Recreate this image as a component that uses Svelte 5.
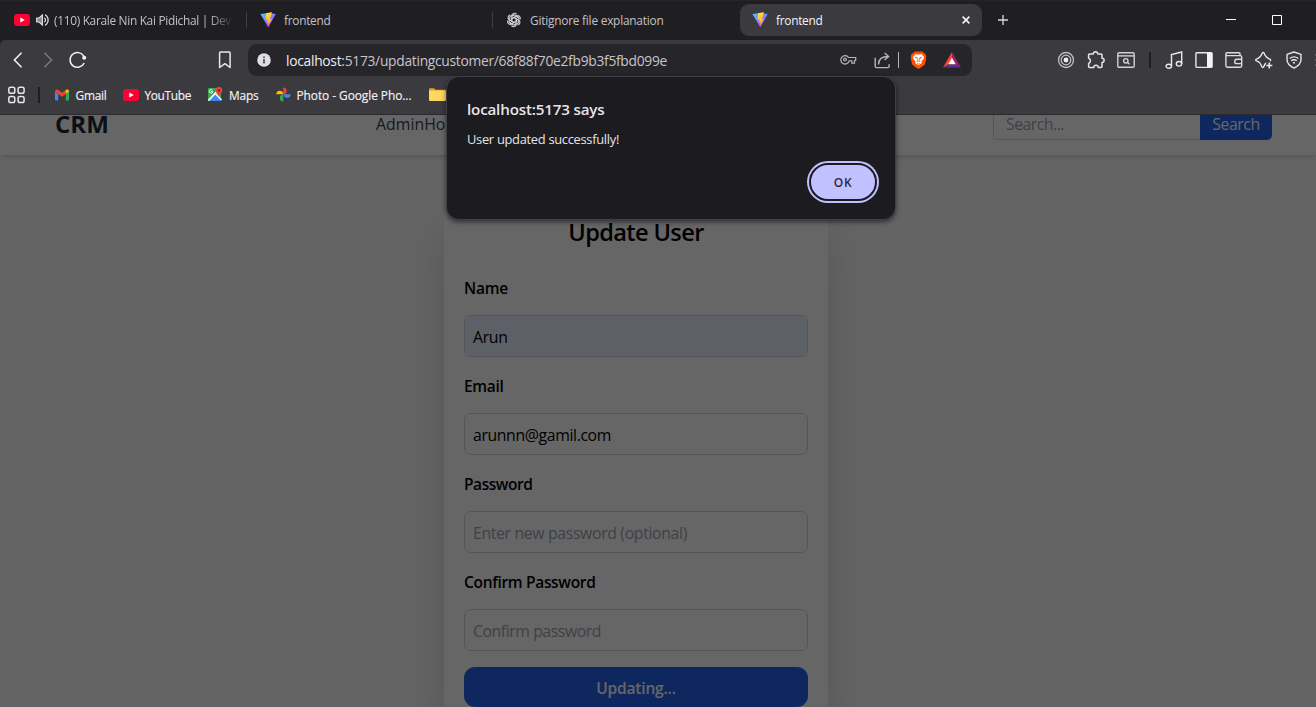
<script>
  // Tracks a text run so that it fills the given width in pixels.
  function fit(node, width) {
    const natural = node.getBoundingClientRect().width;
    const count = node.textContent.length;
    node.style.letterSpacing = `${(width - natural) / count}px`;
  }

  const fields = [
    { label: 'Name', labelWidth: 44, value: 'Arun', width: 34.5, filled: true },
    { label: 'Email', labelWidth: 39.5, value: 'arunnn@gamil.com', width: 138 },
    { label: 'Password', labelWidth: 68.5, hint: 'Enter new password (optional)', width: 214 },
    { label: 'Confirm Password', labelWidth: 131.5, hint: 'Confirm password', width: 128 }
  ];
</script>

{#snippet vite()}
  <svg class="vite" width="16" height="16" viewBox="0 0 16 16">
    <defs>
      <linearGradient id="va" x1="0" y1="0" x2="0.6" y2="1"><stop offset="0" stop-color="#41d1ff" /><stop offset="1" stop-color="#bd34fe" /></linearGradient>
      <linearGradient id="vb" x1="0.4" y1="0" x2="0.6" y2="1"><stop offset="0" stop-color="#ffdc4a" /><stop offset="1" stop-color="#ffa800" /></linearGradient>
    </defs>
    <path d="M.4 2 8 .9 15.7 2 8.3 15.6Z" fill="url(#va)" />
    <path d="M11.2.2 6 1.2 5.6 8l2-.4L7 11l1.6-.5-.8 3.6 4.2-7.2-2 .3L11.9.3Z" fill="url(#vb)" />
  </svg>
{/snippet}

{#snippet tube()}
  <svg width="16" height="12" viewBox="0 0 16 12"><rect width="16" height="12" rx="3" fill="#ff0033" /><path d="M6.3 3.4 10.8 6 6.3 8.6Z" fill="#fff" /></svg>
{/snippet}

<div class="window">
  <div class="tabs">
    <div class="tab first">
      {@render tube()}
      <svg class="sound" width="13" height="14" viewBox="0 0 13 14" fill="none" stroke="#dedde2" stroke-width="1.2"><path d="M.7 5h2.4L6.4 2v10L3.1 9H.7Z" fill="#88878c" /><path d="M8.4 4.7c1.5 1.3 1.5 3.3 0 4.6M9 1.8c4.2 2.3 4.2 8.1 0 10.4" /></svg>
      <span class="fade"><span class="t" use:fit={177}>(110) Karale Nin Kai Pidichal | Dev</span></span>
    </div>
    <div class="tab second">{@render vite()}<span class="t" use:fit={46.5}>frontend</span></div>
    <div class="tab third">
      <svg width="16" height="16" viewBox="-8 -8 16 16" fill="none" stroke="#d0cfd4" stroke-width="1.1">
        {#each [0, 60, 120, 180, 240, 300] as turn}
          <path transform={`rotate(${turn})`} d="M-2.2-1.3V-4.2C-2.2-6.8 1-7.5 2.6-5.6M-2.2-3.6.6-5.2 4.3-3M0-2.6 2.2-1.3V2" />
        {/each}
      </svg>
      <span class="t" use:fit={133.5}>Gitignore file explanation</span>
    </div>
    <div class="tab active">
      {@render vite()}<span class="t" use:fit={46.5}>frontend</span>
      <svg class="close" width="8" height="8" viewBox="0 0 8 8" stroke="#f4f3f7" stroke-width="1.6"><path d="m.6.6 6.8 6.8M7.4.6.6 7.4" /></svg>
    </div>
    <svg class="plus" width="10" height="10" viewBox="0 0 10 10" stroke="#d8d7dc" stroke-width="1.3"><path d="M5 0v10M0 5h10" /></svg>
    <svg class="min" width="10" height="10" viewBox="0 0 10 10" stroke="#fff"><path d="M0 4.5h10" /></svg>
    <svg class="max" width="10" height="10" viewBox="0 0 10 10" stroke="#fff" fill="none"><path d="M.5.5h9v9h-9Z" /></svg>
  </div>

  <div class="toolbar">
    <svg class="back" width="10" height="16" viewBox="0 0 10 16" fill="none" stroke="#f1f0f5" stroke-width="1.6"><path d="M8.6.7 1.4 8l7.2 7.3" /></svg>
    <svg class="next" width="10" height="16" viewBox="0 0 10 16" fill="none" stroke="#77767b" stroke-width="1.6"><path d="m1.4.7 7.2 7.3-7.2 7.3" /></svg>
    <svg class="reload" width="18" height="18" viewBox="0 0 18 18" fill="none" stroke="#f1f0f5" stroke-width="1.5"><path d="M15.2 12A7.4 7.4 0 1 1 15 5.4" /><circle cx="15.2" cy="6.8" r="2" fill="#f1f0f5" stroke="none" /></svg>
    <svg class="mark" width="14" height="18" viewBox="0 0 14 18" fill="none" stroke="#e9e8ed" stroke-width="1.5" stroke-linejoin="round"><path d="M2.5 1h8.7c.5 0 .9.4.9.9V16.5L6.9 12.7 1.6 16.5V1.9c0-.5.4-.9.9-.9Z" /></svg>
    <div class="address">
      <svg width="14" height="14" viewBox="0 0 14 14"><circle cx="7" cy="7" r="6.8" fill="#dfdee5" /><path d="M7 6v4.4M7 3.5v1.4" stroke="#3b3a3f" stroke-width="1.5" /></svg>
      <span class="url" use:fit={381}><b>localhost</b>:5173/updatingcustomer/68f88f70e2fb9b3f5fbd099e</span>
      <svg class="key" width="17" height="12" viewBox="0 0 17 12" fill="none" stroke="#b6b5ba" stroke-width="1.2"><path d="M8.5 3.5h7.2v3h-1.2v2.7h-2.7V6.8H9.1A4.2 4.2 0 1 1 8.5 3.5Z" /><circle cx="5" cy="5.6" r="1.4" /></svg>
      <svg class="share" width="17" height="17" viewBox="0 0 17 17" fill="none" stroke="#b6b5ba" stroke-width="1.4"><path d="M1.2 5.8v8.5c0 .8.5 1.3 1.3 1.3h11.3c.8 0 1.3-.5 1.3-1.3v-2" /><path d="M4.5 12.5c0-4.8 2.8-8 9.6-8M10.6 1l4 3.5-4 3.5" /></svg>
      <i class="rule"></i>
      <svg class="lion" width="17" height="18" viewBox="0 0 17 18"><path d="M4.5.6h8l1.5 1.7 1.2.2 1.2 2.9-.5 1.2.3 1.4-1.4 5.4-3 2.5-3.3 2-3.3-2-3-2.5L.8 8l.3-1.4-.5-1.2 1.2-2.9L3 2.3Z" fill="#ff5000" /><path d="m5.4 3 1.7.4h2.8l1.7-.4 2.3 2.8-.3 2.2-2.2 2.5.4 1.5-3.3 2.5-3.3-2.5.4-1.5L3.4 8l-.3-2.2Z" fill="#fff" /><path d="m4.9 6.2 2.2.4.4 2.8M12.1 6.2l-2.2.4-.4 2.8M6.7 10.7l1.8-.8 1.8.8M7.3 12.4l1.2.9 1.2-.9" fill="none" stroke="#ff5000" stroke-width=".9" /></svg>
      <svg class="bat" width="18" height="16" viewBox="0 0 18 16"><path d="M9 0 0 15.5l5.5-3.2L9 6.2Z" fill="#ff4724" /><path d="m9 0 9 15.5-5.5-3.2L9 6.2Z" fill="#9e1f63" /><path d="M0 15.5h18l-5.5-3.2h-7Z" fill="#662d91" /><path d="m9 5.8 3.8 6.5H5.2Z" fill="#fff" /></svg>
    </div>
    <div class="tools">
      <svg width="18" height="18" viewBox="0 0 18 18" fill="none" stroke="#bebdc2"><circle cx="9" cy="9" r="7.5" stroke-width="1.3" /><circle cx="9" cy="9" r="4.8" stroke-width="1.3" /><circle cx="9" cy="9" r="2.4" fill="#eeedf2" stroke="none" /></svg>
      <svg width="18" height="18" viewBox="0 0 18 18" fill="none" stroke="#e6e5ea" stroke-width="1.5" stroke-linejoin="round"><path d="M2.6 3h3.6a2.3 2.3 0 0 1 4.6 0H14c.6 0 1 .4 1 1v3.2a2.1 2.1 0 0 1 0 4.2v4.1c0 .6-.4 1-1 1h-2.8a2.2 2.2 0 0 0-4.4 0H2.6c-.6 0-1-.4-1-1v-3.1c2.4-.7 2.4-4.5 0-5.1V4c0-.6.4-1 1-1Z" /></svg>
      <svg width="18" height="18" viewBox="0 0 18 18" fill="none" stroke="#d2d1d6" stroke-width="1.4"><rect x=".8" y="1.7" width="16.4" height="14.6" rx="1.2" /><path d="M1 4.9h16" /><circle cx="8.8" cy="9.8" r="2.2" /><path d="m10.4 11.3 2 2" /></svg>
      <i class="divide"></i>
      <svg width="18" height="18" viewBox="0 0 18 18" fill="none" stroke="#e9e8ed" stroke-width="1.4"><ellipse cx="3.8" cy="15.3" rx="2.7" ry="2" /><ellipse cx="14" cy="12.8" rx="2.7" ry="2.3" /><path d="M6.5 15V3.5L16.7 1v11.8" /></svg>
      <svg width="18" height="18" viewBox="0 0 18 18" fill="none" stroke="#e9e8ed" stroke-width="1.4"><rect x=".9" y="1.8" width="16.2" height="14.6" rx="1" /><path d="M12 1.5h5v15h-5Z" fill="#f3f2f7" stroke="none" /></svg>
      <svg width="18" height="18" viewBox="0 0 18 18" fill="none" stroke="#dddce1" stroke-width="1.4"><path d="M15 4.5V2.8c0-.6-.4-1-1-1H2C1.3 1.8.9 2.2.9 2.8v12c0 .8.6 1.4 1.4 1.4h13c.8 0 1.4-.6 1.4-1.4V6c0-.8-.6-1.4-1.4-1.4H1" /><path d="M17 8.2h-5.2c-2.8 0-2.8 4.4 0 4.4H17" /></svg>
      <svg width="18" height="18" viewBox="0 0 18 18" fill="none" stroke="#e9e8ed" stroke-width="1.4" stroke-linejoin="round"><path d="M11 12.2c-1.3.9-1.7 1.8-2.2 3.5C8 16.9 7.2 16.7 6.7 15.4 5.7 12 4.4 10.7 1.4 9.8.5 9.5.5 8.4 1.4 8.1c3.3-1.2 4.7-2.5 5.9-6 .4-1 1.3-1 1.7 0 1.2 3.5 2.5 4.8 5.8 6 1 .4 1 1.5.2 1.8" /><path d="M14.3 11.5v6M11.3 14.5h6" stroke-width="1.6" /></svg>
      <svg width="18" height="18" viewBox="0 0 18 18" fill="none" stroke="#e6e5ea" stroke-width="1.4"><path d="m9 1 7 2.3v5.2c0 4-2.7 6.5-7 8.6-4.3-2.1-7-4.6-7-8.6V3.3Z" stroke-linejoin="round" /><path d="M4.7 7.5c2.5-1.9 6.1-1.9 8.6 0M6.2 9.7c1.7-1.2 3.9-1.2 5.6 0" /><circle cx="9" cy="11.8" r="1" fill="#e6e5ea" stroke="none" /></svg>
    </div>
    <svg class="more" width="1" height="12" viewBox="0 0 1 12" stroke="#5c5b60" stroke-dasharray="2 3"><path d="M.5 0v12" /></svg>
  </div>

  <div class="bookmarks">
    <svg class="grid" width="17" height="18" viewBox="0 0 17 18" fill="none" stroke="#e6e5ea" stroke-width="1.5"><rect x=".8" y="1.2" width="6" height="6" rx="1.8" /><rect x="10.1" y="1.2" width="6" height="6" rx="1.8" /><rect x=".8" y="10.6" width="6" height="6" rx="1.8" /><rect x="10.1" y="10.6" width="6" height="6" rx="1.8" /></svg>
    <i class="divide"></i>
    <svg class="gmail" width="14" height="12" viewBox="0 0 14 12"><path d="M0 2.5 3.2 5v6.5H1c-.6 0-1-.4-1-1Z" fill="#4285f4" /><path d="M14 2.5 10.8 5v6.5H13c.6 0 1-.4 1-1Z" fill="#34a853" /><path d="M0 2.3C0 .5 1.8 0 3 .8l4 3 4-3-.2 4.2L7 7.8 3.2 5 0 2.6Z" fill="#ea4335" /><path d="M10.8.9C12.2 0 14 .6 14 2.2v.6L10.8 5Z" fill="#fbbc04" /></svg>
    <span class="t" use:fit={31}>Gmail</span>
    <span class="yt">{@render tube()}</span>
    <span class="t" use:fit={46.5}>YouTube</span>
    <svg class="maps" width="15" height="15" viewBox="0 0 15 15"><rect y="1" width="13" height="13" rx="1" fill="#34a853" /><path d="M1.5 14 8 7l5 5v2Z" fill="#4285f4" /><path d="M.3 13.5 11 2.5M7.3 6.5 13.5 13" stroke="#f1f1f1" stroke-width="1.8" /><path d="M4.7 4.5H3.2M4.4 3A1.8 1.8 0 1 0 4.9 5" fill="none" stroke="#fff" /><path d="M11 9.5C10.6 7 7.7 6.2 7.7 3.4a3.3 3.3 0 0 1 6.6 0C14.3 6.2 11.4 7 11 9.5Z" fill="#ea4335" /><circle cx="11" cy="3.5" r="1.2" fill="#891b1b" /></svg>
    <span class="t" use:fit={29.5}>Maps</span>
    <svg class="photos" width="15" height="15" viewBox="0 0 15 15"><path d="M7.3 7.3V.4a3.5 3.5 0 0 1 3.5 3.5c0 1.4-.8 2.7-2 3.4Z" fill="#ea4335" /><path d="M7.7 7.3h7a3.5 3.5 0 0 1-7 0Z" fill="#4285f4" /><path d="M7.3 7.7v6.9a3.5 3.5 0 0 1 0-7Z" fill="#34a853" /><path d="M7.3 7.3h-7a3.5 3.5 0 0 1 7 0Z" fill="#fbbc04" /></svg>
    <span class="t" use:fit={115}>Photo - Google Pho...</span>
    <svg class="folder" width="17" height="14" viewBox="0 0 17 14"><path d="M0 1.6C0 .8.5.3 1.3.3h3.6l1.5 1.5h9.3c.8 0 1.3.5 1.3 1.3V12H0Z" fill="#dda51f" /><rect y="2.6" width="17" height="10.3" rx="1.2" fill="#ffd75e" /></svg>
  </div>

  <div class="viewport">
    <div class="nav">
      <span class="brand"><span use:fit={54}>CRM</span></span>
      <span class="link"><span use:fit={93}>AdminHome</span></span>
      <div class="search"><span class="query"><span use:fit={58}>Search...</span></span><span class="go"><span use:fit={47.5}>Search</span></span></div>
    </div>
    <div class="page">
      <div class="card">
        <h2><span use:fit={135.5}>Update User</span></h2>
        {#each fields as f}
          <div class="label"><span use:fit={f.labelWidth}>{f.label}</span></div>
          <div class="input" class:filled={f.filled} class:hint={f.hint}><span use:fit={f.width}>{f.value ?? f.hint}</span></div>
        {/each}
        <div class="submit"><span use:fit={79.5}>Updating...</span></div>
      </div>
    </div>
    <div class="shade"></div>
  </div>

  <div class="dialog">
    <div class="title"><span use:fit={137.5}>localhost:5173 says</span></div>
    <div class="message"><span use:fit={152}>User updated successfully!</span></div>
    <div class="ok"><span use:fit={18.5}>OK</span></div>
  </div>
</div>

<style>
  :global(body) { margin: 0; background: #3b3a3f; }
  .window { position: relative; width: 1316px; height: 707px; overflow: hidden; box-sizing: border-box; display: flex; flex-direction: column; font-family: "Open Sans", "Noto Sans", sans-serif; white-space: nowrap; background: #1f1e23; }
  .window :global(*) { box-sizing: border-box; }
  svg { display: block; flex: none; }
  span { display: inline-block; }
  .tabs { height: 40px; flex: none; display: flex; align-items: center; background: #1f1e23; border-top: 1px solid #252422; padding-bottom: 1px; font-size: 11.9px; color: #c2c1c6; }
  .tab { height: 32px; display: flex; align-items: center; flex: none; }
  .t { line-height: 21px; }
  .first { width: 246px; padding-left: 14px; }
  .sound { margin: 0 5px 0 6px; }
  .fade { width: 178px; overflow: hidden; mask-image: linear-gradient(90deg, #000 155px, transparent 180px); }
  .second, .third { width: 246px; padding-left: 14px; background: linear-gradient(#403f44, #403f44) 0 50% / 1px 16px no-repeat; }
  .second .t { margin-left: 8px; }
  .third .t { margin-left: 8px; }
  .active { width: 242px; margin-left: 2px; padding: 0 12px; border-radius: 9px; background: #3b3a3f; color: #f4f3f7; }
  .active .t { margin-left: 8px; }
  .close { margin-left: auto; }
  .plus { margin-left: 16px; }
  .min { margin-left: auto; margin-right: 36px; }
  .max { margin-right: 34px; }
  .toolbar { height: 40px; flex: none; display: flex; align-items: center; background: #3b3a3f; border-top-left-radius: 5px; }
  .back { margin-left: 13px; }
  .next { margin-left: 20px; }
  .reload { margin-left: 16px; }
  .mark { margin-left: 131px; }
  .address { width: 724px; height: 32px; margin-left: 16px; padding-left: 9px; border-radius: 9px; background: #26252a; display: flex; align-items: center; }
  .url { margin-left: 15px; font-size: 13.8px; line-height: 20px; padding-top: 1px; color: #c6c5ca; }
  .url b { font-weight: 400; color: #eeedf2; }
  .key { margin-left: 173px; }
  .share { margin-left: 17px; }
  .rule { width: 1px; height: 16px; background: #b4b3b8; margin: 0 11px 0 7px; }
  .bat { margin-left: 16px; }
  .tools { display: flex; align-items: center; gap: 12px; margin-left: 85px; }
  .more { margin-left: auto; }
  .divide { width: 2px; height: 16px; background: #1f1e23; flex: none; }
  .tools .divide { margin: 0 2px; }
  .bookmarks { height: 35px; flex: none; display: flex; align-items: center; padding-bottom: 5px; background: #3b3a3f; border-bottom: 1px solid #2b2a2e; color: #f2f1f6; font-size: 11.9px; -webkit-text-stroke: .15px #f2f1f6; }
  .bookmarks .t { padding-top: 1px; }
  .grid { margin-left: 7.5px; }
  .bookmarks .divide { margin: 0 15px 0 13px; }
  .gmail { margin-right: 7px; }
  .yt { margin: 0 6px 0 16px; }
  .maps { margin: 0 6px 0 17px; }
  .photos { margin: 0 6px 0 17px; }
  .folder { margin-left: 17px; }
  .viewport { position: relative; flex: 1; overflow: hidden; background: #f9fafb; }
  .nav { height: 64px; margin-top: -24px; padding-top: 2px; display: flex; align-items: center; background: #fff; box-shadow: 0 4px 6px -1px rgba(0, 0, 0, .1), 0 2px 4px -2px rgba(0, 0, 0, .1); position: relative; font-size: 15.8px; color: #374151; }
  .brand { width: 376px; padding-left: 55px; font-size: 24px; font-weight: 700; line-height: 32px; color: #1f2937; }
  .link { width: 617px; font-weight: 500; }
  .search { display: flex; height: 32px; }
  .query { width: 207px; padding-left: 12px; line-height: 31px; border: 1px solid #d1d5db; border-right: 0; border-radius: 5px 0 0 5px; color: #9ca3af; }
  .go { width: 72px; line-height: 33px; text-align: center; background: #2563eb; color: #fff; border-radius: 0 5px 5px 0; }
  .page { display: flex; padding: 42px 0 0 444px; }
  .card { width: 384px; height: 530px; padding: 17px 20px 20px; background: #fff; border-radius: 12px; box-shadow: 0 25px 50px -12px rgba(0, 0, 0, .25); color: #000; }
  h2 { margin: 0 0 25px; text-align: center; font-size: 23.6px; font-weight: 600; line-height: 36px; }
  .label { height: 24px; line-height: 26px; font-size: 15.5px; font-weight: 600; margin-bottom: 16px; }
  .input { height: 42px; margin-bottom: 16px; padding-left: 8px; line-height: 43px; border: 1px solid #d1d5db; border-radius: 7px; font-size: 15.8px; }
  .filled { background: #e8f0fe; }
  .hint { color: #9ca3af; }
  .submit { height: 40px; line-height: 42px; border-radius: 11px; background: #2563eb; color: #fff; text-align: center; font-size: 15.5px; font-weight: 600; }
  .shade { position: absolute; inset: 0; background: rgba(0, 0, 0, .6); }
  .dialog { position: absolute; left: 447px; top: 77px; width: 448px; height: 142px; border-radius: 12px; background: #1c1b1f; box-shadow: 0 0 0 1px #404045, 0 2px 5px 1px rgba(0, 0, 0, .55); padding: 20px 18px 18px 20px; color: #e5e4e9; }
  .title { font-size: 15.2px; font-weight: 600; line-height: 24px; height: 24px; }
  .message { margin-top: 8px; font-size: 12.9px; line-height: 20px; height: 20px; }
  .ok { width: 68px; height: 38px; margin: 14px 0 0 auto; border-radius: 19px; border: 2px solid #1c1b1f; box-shadow: 0 0 0 2px #c2c1ff; background: #c2c1ff; color: #292a40; text-align: center; font-size: 12px; font-weight: 600; line-height: 35px; }
</style>
